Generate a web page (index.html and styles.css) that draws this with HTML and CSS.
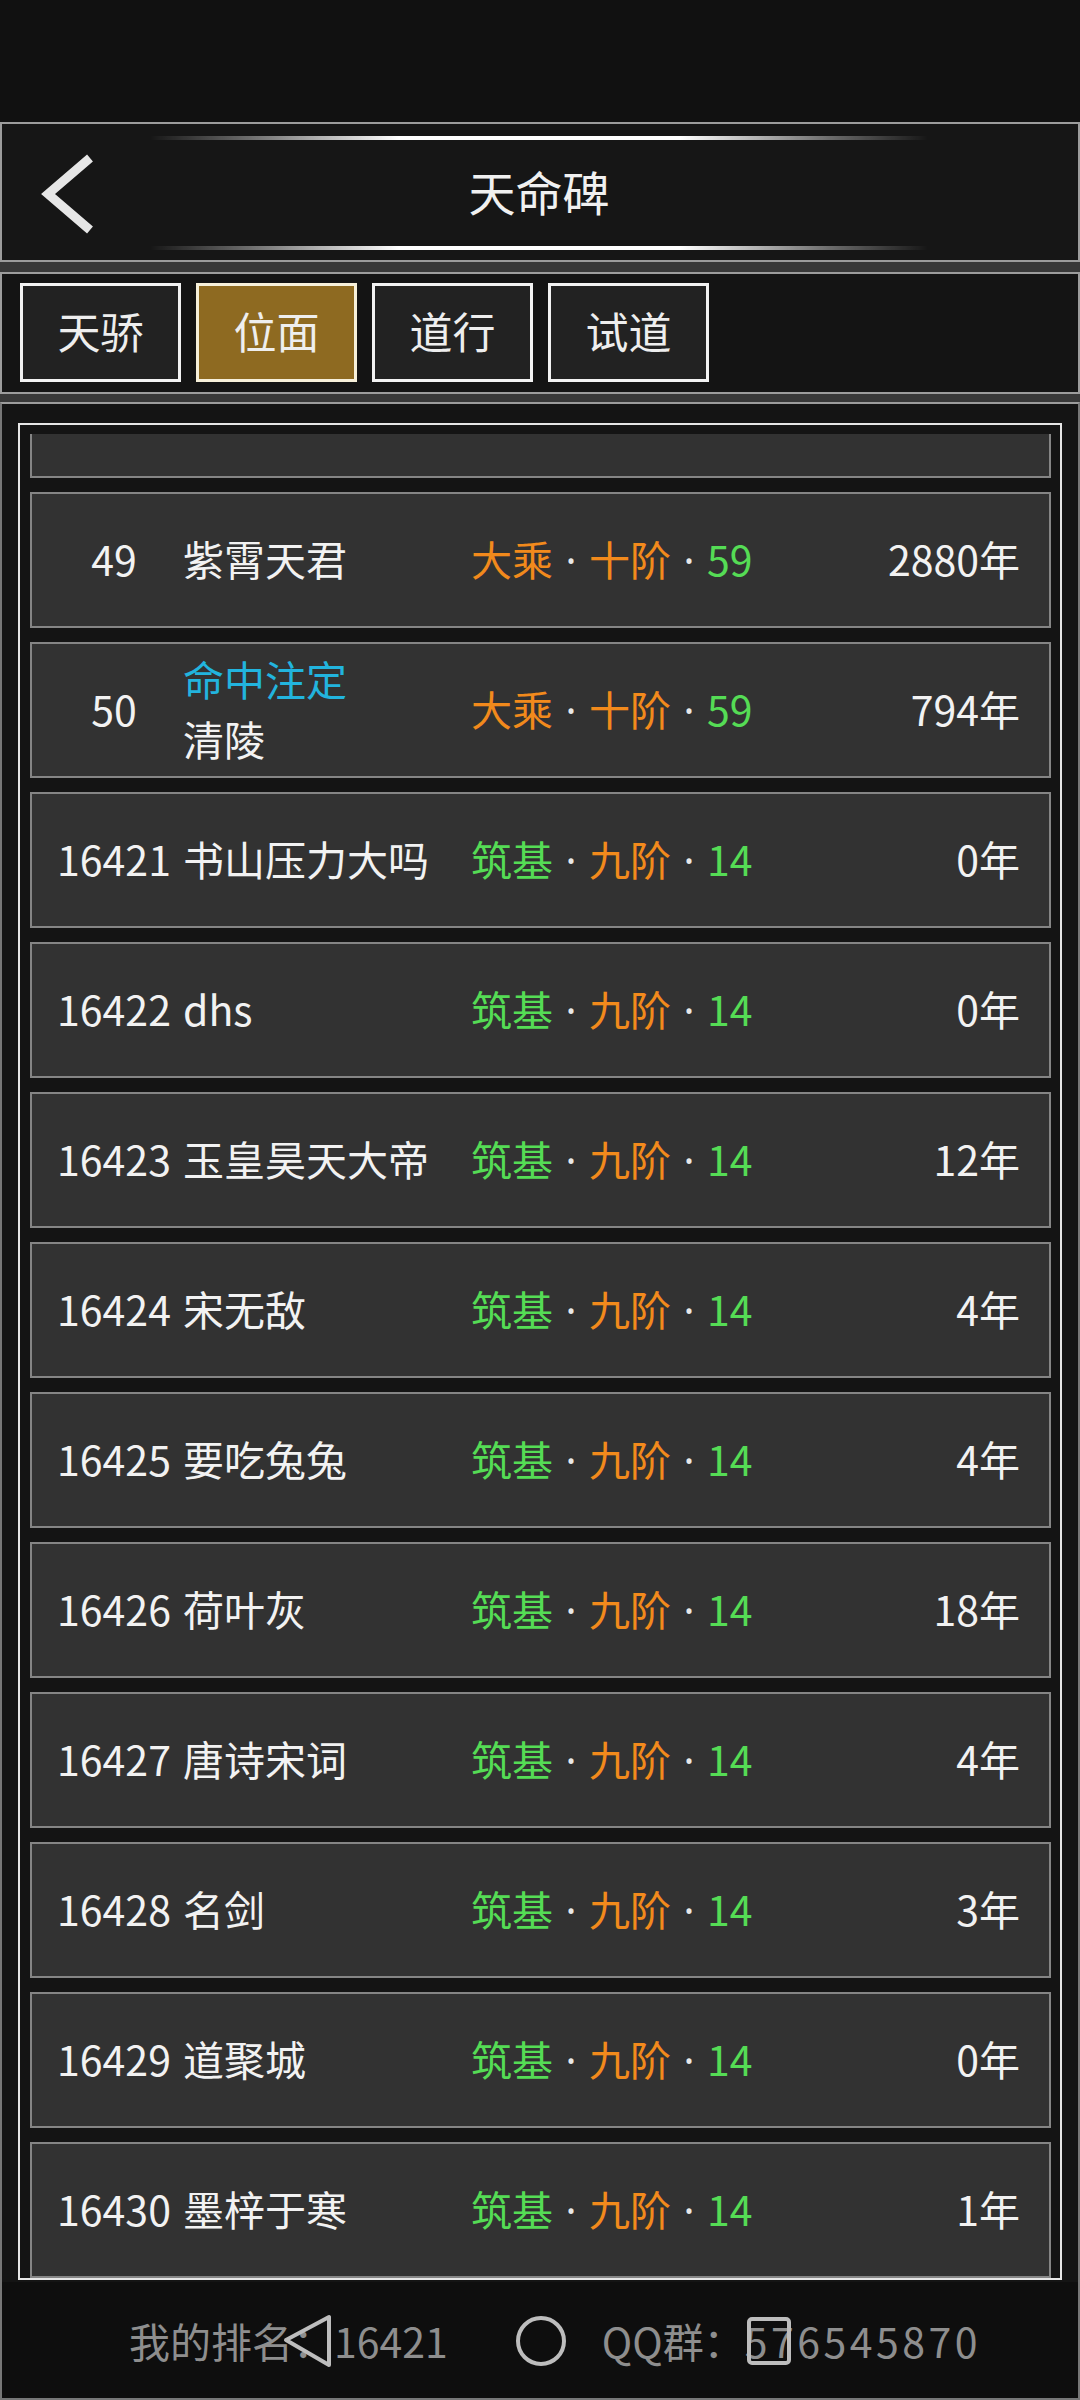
FILE: index.html
```html
<!DOCTYPE html>
<html lang="zh-CN">
<head>
  <meta charset="utf-8">
  <title>天命碑</title>
  <link rel="stylesheet" href="styles.css">
</head>
<body>
  <div class="statusBar"></div>

  <div class="header">
    <div class="backBtn">
      <svg width="60" height="90" viewBox="0 0 60 90">
        <polyline points="50,7 8,43 50,79" fill="none" stroke="#e6e6e6" stroke-width="9" stroke-linejoin="miter"/>
      </svg>
    </div>
    <div class="titleCol">
      <div class="glow"></div>
      <h1>天命碑</h1>
      <div class="glow"></div>
    </div>
  </div>

  <div class="strip"></div>

  <div class="tabBar">
    <div class="tab">天骄</div>
    <div class="tab active">位面</div>
    <div class="tab">道行</div>
    <div class="tab">试道</div>
  </div>

  <div class="strip short"></div>

  <div class="board">
    <div class="frame">
      <div class="viewport">
        <div class="list">
          <div class="row"></div>
          <div class="row">
            <span class="rank">49</span>
            <span class="name">紫霄天君</span>
            <span class="realm"><em class="o">大乘</em><span class="dot">·</span><em class="o">十阶</em><span class="dot">·</span><em class="g">59</em></span>
            <span class="years">2880年</span>
          </div>
          <div class="row">
            <span class="rank">50</span>
            <span class="name"><span class="title">命中注定</span><br>清陵</span>
            <span class="realm"><em class="o">大乘</em><span class="dot">·</span><em class="o">十阶</em><span class="dot">·</span><em class="g">59</em></span>
            <span class="years">794年</span>
          </div>
          <div class="row">
            <span class="rank">16421</span>
            <span class="name">书山压力大吗</span>
            <span class="realm"><em class="g">筑基</em><span class="dot">·</span><em class="o">九阶</em><span class="dot">·</span><em class="g">14</em></span>
            <span class="years">0年</span>
          </div>
          <div class="row">
            <span class="rank">16422</span>
            <span class="name">dhs</span>
            <span class="realm"><em class="g">筑基</em><span class="dot">·</span><em class="o">九阶</em><span class="dot">·</span><em class="g">14</em></span>
            <span class="years">0年</span>
          </div>
          <div class="row">
            <span class="rank">16423</span>
            <span class="name">玉皇昊天大帝</span>
            <span class="realm"><em class="g">筑基</em><span class="dot">·</span><em class="o">九阶</em><span class="dot">·</span><em class="g">14</em></span>
            <span class="years">12年</span>
          </div>
          <div class="row">
            <span class="rank">16424</span>
            <span class="name">宋无敌</span>
            <span class="realm"><em class="g">筑基</em><span class="dot">·</span><em class="o">九阶</em><span class="dot">·</span><em class="g">14</em></span>
            <span class="years">4年</span>
          </div>
          <div class="row">
            <span class="rank">16425</span>
            <span class="name">要吃兔兔</span>
            <span class="realm"><em class="g">筑基</em><span class="dot">·</span><em class="o">九阶</em><span class="dot">·</span><em class="g">14</em></span>
            <span class="years">4年</span>
          </div>
          <div class="row">
            <span class="rank">16426</span>
            <span class="name">荷叶灰</span>
            <span class="realm"><em class="g">筑基</em><span class="dot">·</span><em class="o">九阶</em><span class="dot">·</span><em class="g">14</em></span>
            <span class="years">18年</span>
          </div>
          <div class="row">
            <span class="rank">16427</span>
            <span class="name">唐诗宋词</span>
            <span class="realm"><em class="g">筑基</em><span class="dot">·</span><em class="o">九阶</em><span class="dot">·</span><em class="g">14</em></span>
            <span class="years">4年</span>
          </div>
          <div class="row">
            <span class="rank">16428</span>
            <span class="name">名剑</span>
            <span class="realm"><em class="g">筑基</em><span class="dot">·</span><em class="o">九阶</em><span class="dot">·</span><em class="g">14</em></span>
            <span class="years">3年</span>
          </div>
          <div class="row">
            <span class="rank">16429</span>
            <span class="name">道聚城</span>
            <span class="realm"><em class="g">筑基</em><span class="dot">·</span><em class="o">九阶</em><span class="dot">·</span><em class="g">14</em></span>
            <span class="years">0年</span>
          </div>
          <div class="row">
            <span class="rank">16430</span>
            <span class="name">墨梓于寒</span>
            <span class="realm"><em class="g">筑基</em><span class="dot">·</span><em class="o">九阶</em><span class="dot">·</span><em class="g">14</em></span>
            <span class="years">1年</span>
          </div>
        </div>
      </div>
    </div>
  </div>

  <div class="footer">
    <span>我的排名：16421</span>
    <span>QQ群：<span class="qqNum">576545870</span></span>
    <svg class="navKeys" width="1080" height="118" viewBox="0 0 1080 118">
      <polygon points="286,58 329,35 329,83" fill="none" stroke="#bdbdbd" stroke-width="4" stroke-linejoin="round"/>
      <circle cx="541" cy="59" r="23" fill="none" stroke="#bdbdbd" stroke-width="4"/>
      <rect x="749" y="37" width="40" height="44" rx="3" fill="none" stroke="#bdbdbd" stroke-width="4"/>
    </svg>
  </div>
</body>
</html>
```

FILE: styles.css
```css
body {
  background-color: #111111;
  color: #eeeeee;
  font-family: "Noto Sans CJK SC", "Noto Sans", sans-serif;
  margin: 0;
  padding: 0;
  width: 1080px;
}

.statusBar {
  height: 122px;
  background-color: #111111;
}

.header {
  background-color: #161616;
  border: 2px solid #9c9c9c;
  display: grid;
  grid-template-columns: 147px 780px 1fr;
  height: 136px;
}

.backBtn {
  padding: 27px 0 0 38px;
}

.titleCol {
  display: flex;
  flex-direction: column;
  align-items: stretch;
  padding: 12px 0 10px;
}

.glow {
  height: 4px;
  background-image: linear-gradient(90deg, rgba(255,255,255,0), rgba(255,255,255,0.35) 12%, #ffffff 32%, #ffffff 68%, rgba(255,255,255,0.35) 88%, rgba(255,255,255,0));
  filter: blur(0.6px);
}

h1 {
  flex: 1;
  margin: 0;
  padding-bottom: 5px;
  font-size: 47px;
  font-weight: normal;
  color: #f0f0f0;
  display: flex;
  align-items: center;
  justify-content: center;
}

.strip {
  height: 10px;
  background-color: #383838;
}

.strip.short {
  height: 8px;
}

.tabBar {
  background-color: #141414;
  border: 2px solid #9c9c9c;
  display: flex;
  gap: 15px;
  padding: 9px 18px 10px;
}

.tab {
  background-color: #222222;
  border: 3px solid #f2f2f2;
  box-sizing: border-box;
  width: 161px;
  height: 99px;
  padding-bottom: 5px;
  font-size: 43px;
  color: #eeeeee;
  display: flex;
  align-items: center;
  justify-content: center;
}

.tab.active {
  background-color: #8e6a21;
  border-color: #f7f0da;
}

.board {
  background-color: #141414;
  border-top: 2px solid #9c9c9c;
  border-left: 2px solid #777777;
  border-right: 2px solid #777777;
  padding: 19px 16px 2px;
}

.frame {
  border: 2px solid #e6e6e6;
  padding: 9px 9px 0 10px;
}

.viewport {
  height: 1844px;
  overflow: hidden;
}

.list {
  margin-top: -92px;
  display: flex;
  flex-direction: column;
  gap: 14px;
}

.row {
  background-color: #323232;
  border: 2px solid #858585;
  box-sizing: border-box;
  height: 136px;
  display: flex;
  align-items: center;
  padding: 0 29px 5px 20px;
  font-size: 41px;
  color: #f2f2f2;
}

.rank {
  width: 124px;
  text-align: center;
  flex-shrink: 0;
}

.name {
  width: 288px;
  margin-left: 7px;
  flex-shrink: 0;
  line-height: 60px;
  white-space: nowrap;
}

.title {
  color: #22b4de;
}

.realm {
  flex: 1;
  white-space: nowrap;
  color: #e8e8e8;
}

.dot {
  display: inline-block;
  width: 36px;
  text-align: center;
  font-family: "Noto Sans", sans-serif;
}

em {
  font-style: normal;
}

.o {
  color: #f28a1c;
}

.g {
  color: #55dc55;
}

.years {
  text-align: right;
  white-space: nowrap;
}

.footer {
  position: relative;
  background-color: #0e0e0e;
  border-left: 2px solid #777777;
  border-right: 2px solid #777777;
  border-bottom: 2px solid #777777;
  box-sizing: border-box;
  height: 118px;
  display: flex;
  align-items: center;
  gap: 154px;
  padding-left: 127px;
  font-size: 41px;
  color: #8e8e8e;
}

.qqNum {
  letter-spacing: 3.5px;
}

.navKeys {
  position: absolute;
  left: -2px;
  top: 0;
}
```
